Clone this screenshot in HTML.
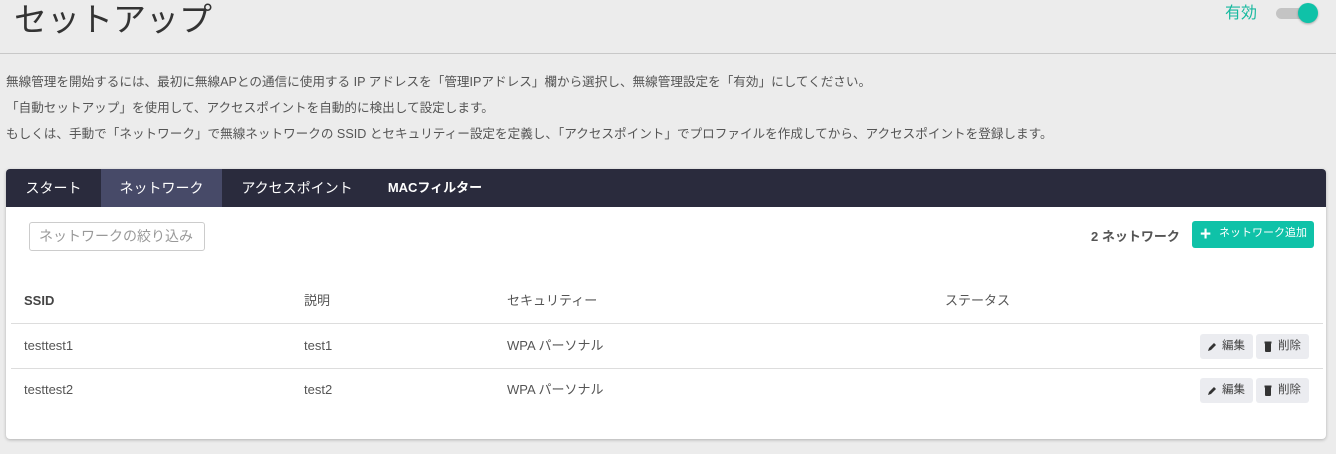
<!DOCTYPE html>
<html><head><meta charset="utf-8"><style>
*{box-sizing:border-box;margin:0;padding:0}
body{width:1336px;height:454px;background:#ececec;font-family:"Liberation Sans","Noto Sans CJK JP",sans-serif;color:#555;position:relative;overflow:hidden}
.abs{position:absolute}
h1{position:absolute;left:14px;top:0px;font-size:33px;font-weight:normal;color:#333;line-height:40px}
.en{left:1225px;top:4px;font-size:16px;color:#17b99f;line-height:20px}
.tg{left:1276px;top:8px;width:38px;height:11px;border-radius:6px;background:#c4c4c4}
.kn{left:1298px;top:3px;width:20px;height:20px;border-radius:50%;background:#0fc2a8;box-shadow:0 1px 2px rgba(0,0,0,.3)}
.hr{left:0;top:53px;width:1336px;height:1px;background:#c8c8c8}
.p{left:6px;font-size:12.6px;color:#555;white-space:nowrap;line-height:18px}
.card{left:6px;top:169px;width:1320px;height:270px;background:#fff;border-radius:4px;box-shadow:0 1px 3px rgba(0,0,0,.25);overflow:hidden}
.tabs{position:absolute;left:0;top:0;width:100%;height:38px;background:#2a2b3d}
.tab{position:absolute;top:0;height:38px;line-height:38px;color:#fff;font-size:14px;text-align:center}
.inp{left:23px;top:53px;width:176px;height:29px;border:1px solid #ccc;border-radius:3px;font-size:14px;color:#999;padding-left:9px;line-height:27px}
.cnt{left:1085px;top:59px;font-size:13px;font-weight:bold;color:#555;line-height:18px}
.add{left:1186px;top:52px;width:122px;height:27px;background:#0fc2a8;border-radius:3px;color:#fff;font-size:11px;line-height:25px;padding-left:27px}
.add:before{content:"+";position:absolute;left:8px;top:1px;font-size:19px;font-weight:bold;line-height:25px}
.c{position:absolute;font-size:13px;color:#555;line-height:18px}
.th{font-weight:bold;color:#444}
.line{position:absolute;left:5px;width:1312px;height:1px;background:#ddd}
.btn{position:absolute;height:25px;width:53px;background:#ebecf0;border-radius:3px;font-size:11.5px;color:#444;line-height:25px;padding-left:22px}
</style></head><body>
<h1>セットアップ</h1>
<div class="abs en">有効</div>
<div class="abs tg"></div><div class="abs kn"></div>
<div class="abs hr"></div>
<div class="abs p" style="top:73px">無線管理を開始するには、最初に無線APとの通信に使用する IP アドレスを「管理IPアドレス」欄から選択し、無線管理設定を「有効」にしてください。</div>
<div class="abs p" style="top:99px">「自動セットアップ」を使用して、アクセスポイントを自動的に検出して設定します。</div>
<div class="abs p" style="top:125px">もしくは、手動で「ネットワーク」で無線ネットワークの SSID とセキュリティー設定を定義し、「アクセスポイント」でプロファイルを作成してから、アクセスポイントを登録します。</div>
<div class="abs card">
<div class="tabs">
<div class="tab" style="left:0;width:95px">スタート</div>
<div class="tab" style="left:95px;width:121px;background:#474a68">ネットワーク</div>
<div class="tab" style="left:216px;width:150px">アクセスポイント</div>
<div class="tab" style="left:366px;width:126px;font-weight:bold;font-size:13px">MACフィルター</div>
</div>
<div class="abs inp">ネットワークの絞り込み</div>
<div class="abs cnt">2 ネットワーク</div>
<div class="abs add">ネットワーク追加</div>
<div class="c th" style="left:18px;top:123px">SSID</div>
<div class="c" style="left:298px;top:123px">説明</div>
<div class="c" style="left:501px;top:123px">セキュリティー</div>
<div class="c" style="left:939px;top:123px">ステータス</div>
<div class="line" style="top:154px"></div>
<div class="c" style="left:18px;top:168px">testtest1</div>
<div class="c" style="left:298px;top:168px">test1</div>
<div class="c" style="left:501px;top:168px">WPA パーソナル</div>
<div class="btn" style="left:1194px;top:165px"><svg class="abs" style="left:7px;top:8px" width="10" height="10" viewBox="0 0 10 10"><path d="M1 9L2 6L7 1L9 3L4 8Z" fill="#333"/></svg>編集</div>
<div class="btn" style="left:1250px;top:165px"><svg class="abs" style="left:8px;top:7px" width="8" height="11" viewBox="0 0 8 11"><rect x="1" y="2" width="6" height="9" rx="1" fill="#333"/><rect x="0.5" y="0.5" width="7" height="2" fill="#333"/></svg>削除</div>
<div class="line" style="top:199px"></div>
<div class="c" style="left:18px;top:212px">testtest2</div>
<div class="c" style="left:298px;top:212px">test2</div>
<div class="c" style="left:501px;top:212px">WPA パーソナル</div>
<div class="btn" style="left:1194px;top:209px"><svg class="abs" style="left:7px;top:8px" width="10" height="10" viewBox="0 0 10 10"><path d="M1 9L2 6L7 1L9 3L4 8Z" fill="#333"/></svg>編集</div>
<div class="btn" style="left:1250px;top:209px"><svg class="abs" style="left:8px;top:7px" width="8" height="11" viewBox="0 0 8 11"><rect x="1" y="2" width="6" height="9" rx="1" fill="#333"/><rect x="0.5" y="0.5" width="7" height="2" fill="#333"/></svg>削除</div>
</div>
</body></html>
